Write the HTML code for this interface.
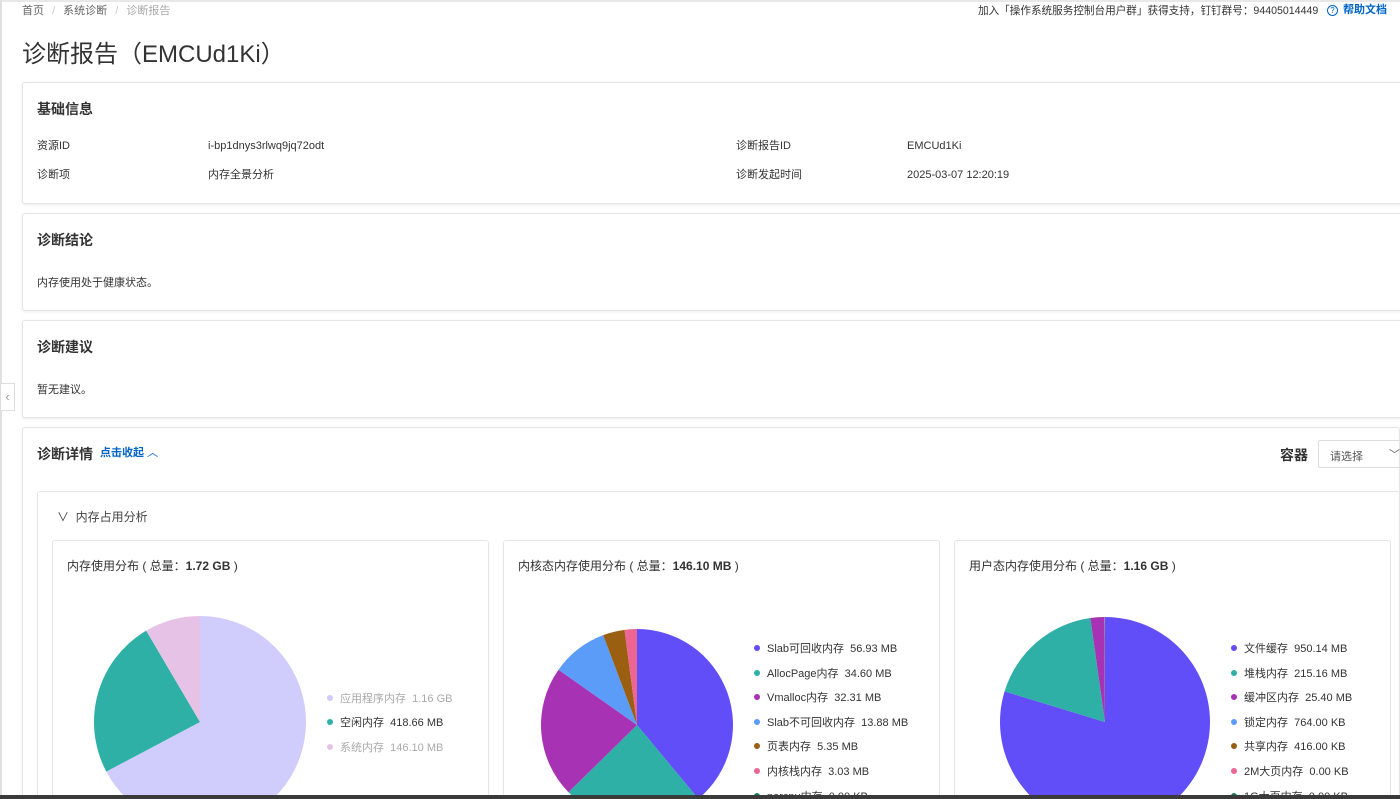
<!DOCTYPE html>
<html style="overflow:hidden;width:1400px;height:799px"><head><meta charset="utf-8"><style>
*{box-sizing:border-box;margin:0;padding:0}
body{width:1400px;height:799px;overflow:hidden;background:#fff;font-family:"Liberation Sans","Noto Sans CJK SC",sans-serif;color:#333;position:relative}
.abs{position:absolute}
.card{position:absolute;border:1px solid #e5e5e5;border-radius:3px;background:#fff;box-shadow:0 1px 3px rgba(0,0,0,.08)}
.h{position:absolute;font-size:14px;font-weight:bold;color:#333}
.t{position:absolute;font-size:11px;color:#333;white-space:nowrap;line-height:14px}
.lg{position:absolute;font-size:11px;color:#333;white-space:nowrap}
.lg i{display:inline-block;width:6px;height:6px;border-radius:50%;margin-right:7px;vertical-align:1px}
.open{border-bottom:none;border-bottom-left-radius:0;border-bottom-right-radius:0}
</style></head><body>
<div class="abs" style="left:0;top:0;width:1400px;height:2px;background:#e8e8e8"></div>
<div class="abs" style="left:0;top:0;width:2px;height:799px;background:#e0e0e0"></div>
<div class="abs" style="left:0;top:383px;width:15px;height:28px;border:1px solid #ddd;background:#fff;color:#999;font-size:13px;line-height:26px;text-align:center">‹</div>
<div class="t" style="left:22px;top:4px;color:#666">首页 <span style="color:#ccc;margin:0 5px">/</span> 系统诊断 <span style="color:#ccc;margin:0 5px">/</span> <span style="color:#aaa">诊断报告</span></div>
<div class="t" style="left:978px;top:4px;color:#333;font-size:10.6px">加入「操作系统服务控制台用户群」获得支持，钉钉群号：94405014449</div>
<div class="t" style="left:1327px;top:3px;color:#0064c8;font-weight:bold"><span style="display:inline-block;width:11px;height:11px;border:1px solid #0064c8;border-radius:50%;font-size:8px;line-height:9px;text-align:center;margin-right:5px;font-weight:normal">?</span>帮助文档</div>
<div class="abs" style="left:22px;top:34px;font-size:24px;color:#333">诊断报告（EMCUd1Ki）</div>

<div class="card" style="left:22px;top:82px;width:1400px;height:122px"></div>
<div class="h" style="left:37px;top:99px">基础信息</div>
<div class="t" style="left:37px;top:139px">资源ID</div>
<div class="t" style="left:208px;top:139px">i-bp1dnys3rlwq9jq72odt</div>
<div class="t" style="left:736px;top:139px">诊断报告ID</div>
<div class="t" style="left:907px;top:139px">EMCUd1Ki</div>
<div class="t" style="left:37px;top:168px">诊断项</div>
<div class="t" style="left:208px;top:168px">内存全景分析</div>
<div class="t" style="left:736px;top:168px">诊断发起时间</div>
<div class="t" style="left:907px;top:168px">2025-03-07 12:20:19</div>

<div class="card" style="left:22px;top:213px;width:1400px;height:98px"></div>
<div class="h" style="left:37px;top:230px">诊断结论</div>
<div class="t" style="left:37px;top:276px">内存使用处于健康状态。</div>

<div class="card" style="left:22px;top:320px;width:1400px;height:98px"></div>
<div class="h" style="left:37px;top:337px">诊断建议</div>
<div class="t" style="left:37px;top:383px">暂无建议。</div>

<div class="card open" style="left:22px;top:427px;width:1378px;height:372px"></div>
<div class="h" style="left:37px;top:444px">诊断详情</div>
<div class="t" style="left:100px;top:446px;color:#0064c8;font-weight:bold">点击收起 <span style="font-weight:normal">︿</span></div>
<div class="h" style="left:1280px;top:445px">容器</div>
<div class="abs" style="left:1318px;top:440px;width:100px;height:28px;border:1px solid #ddd;border-radius:2px;font-size:11px;color:#555;padding:7px 11px">请选择<span style="position:absolute;left:70px;top:5px;color:#666">﹀</span></div>

<div class="card open" style="left:37px;top:491px;width:1363px;height:308px;box-shadow:none"></div>
<div class="abs" style="left:57px;top:508px;font-size:12px;color:#444">∨&nbsp; 内存占用分析</div>

<div class="card open" style="left:52px;top:540px;width:437px;height:259px;box-shadow:none"></div>
<div class="card open" style="left:503px;top:540px;width:437px;height:259px;box-shadow:none"></div>
<div class="card open" style="left:954px;top:540px;width:437px;height:259px;box-shadow:none"></div>
<div class="t" style="left:67px;top:559px;font-size:12px">内存使用分布 ( 总量：<b>1.72 GB</b> )</div>
<div class="t" style="left:518px;top:559px;font-size:12px">内核态内存使用分布 ( 总量：<b>146.10 MB</b> )</div>
<div class="t" style="left:969px;top:559px;font-size:12px">用户态内存使用分布 ( 总量：<b>1.16 GB</b> )</div>

<svg class="abs" style="left:0;top:0" width="1400" height="799" id="s"></svg>

<div class="lg" style="left:327px;top:690px;color:#aaa"><i style="background:#d0ccfb"></i>应用程序内存&nbsp; 1.16 GB</div>
<div class="lg" style="left:327px;top:714px"><i style="background:#2fb0a6"></i>空闲内存&nbsp; 418.66 MB</div>
<div class="lg" style="left:327px;top:739px;color:#aaa"><i style="background:#e6c3e6"></i>系统内存&nbsp; 146.10 MB</div>

<div id="l2" class="abs" style="left:0;top:0;width:1400px;height:799px;overflow:hidden"></div>
<div class="abs" style="left:0;top:795px;width:1400px;height:4px;background:#3a3a3a;z-index:5"></div>
<script>
var s=document.getElementById('s'),NS='http://www.w3.org/2000/svg';
function pie(cx,cy,r,vals,cols){var t=vals.reduce((a,b)=>a+b,0),a=0;
vals.forEach(function(v,i){var a2=a+v/t*2*Math.PI;var x1=cx+r*Math.sin(a),y1=cy-r*Math.cos(a),x2=cx+r*Math.sin(a2),y2=cy-r*Math.cos(a2);
var p=document.createElementNS(NS,'path');p.setAttribute('d','M'+cx+','+cy+'L'+x1+','+y1+'A'+r+','+r+' 0 '+((a2-a)>Math.PI?1:0)+' 1 '+x2+','+y2+'Z');p.setAttribute('fill',cols[i]);s.appendChild(p);a=a2;});}
pie(200,722,106,[1160,418.66,146.1],['#d0ccfb','#2fb0a6','#e6c3e6']);
pie(637,725,96,[56.93,34.6,32.31,13.88,5.35,3.03],['#614ef8','#2fb0a6','#a832b4','#5b9cf9','#9a5f10','#ec6593']);
pie(1105,722,105,[950.14,215.16,25.4,0.76,0.41],['#614ef8','#2fb0a6','#a832b4','#5b9cf9','#9a5f10']);
var L=[[754,['Slab可回收内存&nbsp; 56.93 MB','AllocPage内存&nbsp; 34.60 MB','Vmalloc内存&nbsp; 32.31 MB','Slab不可回收内存&nbsp; 13.88 MB','页表内存&nbsp; 5.35 MB','内核栈内存&nbsp; 3.03 MB','percpu内存&nbsp; 0.00 KB']],
[1231,['文件缓存&nbsp; 950.14 MB','堆栈内存&nbsp; 215.16 MB','缓冲区内存&nbsp; 25.40 MB','锁定内存&nbsp; 764.00 KB','共享内存&nbsp; 416.00 KB','2M大页内存&nbsp; 0.00 KB','1G大页内存&nbsp; 0.00 KB']]];
var C=['#614ef8','#2fb0a6','#a832b4','#5b9cf9','#9a5f10','#ec6593','#1a7a5a'],h='';
L.forEach(function(g){g[1].forEach(function(t,i){h+='<div class="lg" style="left:'+g[0]+'px;top:'+(640+i*24.6)+'px"><i style="background:'+C[i]+'"></i>'+t+'</div>';});});
document.getElementById('l2').innerHTML=h;
</script>
</body></html>
